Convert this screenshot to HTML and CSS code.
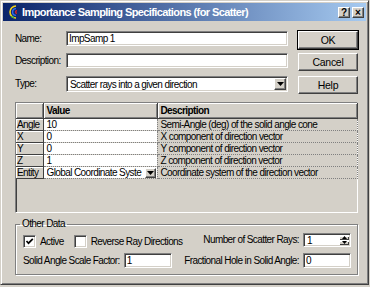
FILE: index.html
```html
<!doctype html>
<html lang="en">
<head>
  <meta charset="UTF-8">
  <title>Importance Sampling Specifications (for Scatter)</title>
  <link rel="stylesheet" href="styles.css">
</head>
<body>
  <div class="window">
    <div class="titlebar">
      <svg class="app-icon" viewBox="0 0 12 14" width="12" height="14">
        <path d="M10 1 A6 6 0 0 0 10 13" stroke="#f2d21a" stroke-width="1.6" fill="none"/>
        <path d="M10 3.6 A3.4 3.4 0 0 0 10 10.4" stroke="#2f6cf0" stroke-width="1.4" fill="none"/>
        <path d="M11 5.6 A1.4 1.4 0 0 0 11 8.4" stroke="#e02424" stroke-width="1.3" fill="none"/>
        <path d="M5 11.5 L8 12.6" stroke="#2fb54a" stroke-width="1.3"/>
      </svg>
      <span class="title">Importance Sampling Specifications (for Scatter)</span>
      <div class="caption-btns">
        <span class="cap-btn">?</span>
        <span class="cap-btn">×</span>
      </div>
    </div>

    <div class="client">
      <div class="top">
        <label class="lbl">Name:</label>
        <input class="edit" type="text" value="ImpSamp 1">
        <button class="btn default">OK</button>

        <label class="lbl">Description:</label>
        <input class="edit" type="text" value="">
        <button class="btn">Cancel</button>

        <label class="lbl">Type:</label>
        <div class="combo">
          <span class="combo-text">Scatter rays into a given direction</span>
          <span class="drop-btn"><svg viewBox="0 0 7 4" width="7" height="4"><path d="M0 0h7L3.5 4z" fill="#000"/></svg></span>
        </div>
        <button class="btn">Help</button>
      </div>

      <div class="grid-frame">
        <table class="props">
          <colgroup>
            <col class="c-name">
            <col class="c-value">
            <col class="c-desc">
          </colgroup>
          <thead>
            <tr>
              <th></th>
              <th>Value</th>
              <th>Description</th>
            </tr>
          </thead>
          <tbody>
            <tr>
              <th>Angle</th>
              <td class="val">10</td>
              <td class="desc">Semi-Angle (deg) of the solid angle cone</td>
            </tr>
            <tr>
              <th>X</th>
              <td class="val">0</td>
              <td class="desc">X component of direction vector</td>
            </tr>
            <tr>
              <th>Y</th>
              <td class="val">0</td>
              <td class="desc">Y component of direction vector</td>
            </tr>
            <tr>
              <th>Z</th>
              <td class="val">1</td>
              <td class="desc">Z component of direction vector</td>
            </tr>
            <tr>
              <th>Entity</th>
              <td class="val">
                <div class="cell-combo">
                  <span class="cell-combo-text">Global Coordinate Syste</span>
                  <span class="drop-btn small"><svg viewBox="0 0 7 4" width="7" height="4"><path d="M0 0h7L3.5 4z" fill="#000"/></svg></span>
                </div>
              </td>
              <td class="desc">Coordinate system of the direction vector</td>
            </tr>
          </tbody>
        </table>
      </div>

      <fieldset class="group">
        <legend>Other Data</legend>
        <div class="group-row">
          <div class="checks">
            <span class="check">
              <span class="box"><svg viewBox="0 0 9 9" width="9" height="9"><path d="M1.5 4 L3.5 6.2 L7.8 1.8" stroke="#000" stroke-width="1.7" fill="none"/></svg></span>
              Active
            </span>
            <span class="check">
              <span class="box"></span>
              Reverse Ray Directions
            </span>
          </div>
          <div class="field">
            <span>Number of Scatter Rays:</span>
            <div class="spin">
              <span class="spin-text">1</span>
              <span class="spin-btns">
                <span class="spin-btn"><svg viewBox="0 0 5 3" width="5" height="3"><path d="M0 3h5L2.5 0z" fill="#000"/></svg></span>
                <span class="spin-btn"><svg viewBox="0 0 5 3" width="5" height="3"><path d="M0 0h5L2.5 3z" fill="#000"/></svg></span>
              </span>
            </div>
          </div>
        </div>
        <div class="group-row second">
          <div class="field">
            <span>Solid Angle Scale Factor:</span>
            <input class="edit small" type="text" value="1">
          </div>
          <div class="field">
            <span>Fractional Hole in Solid Angle:</span>
            <input class="edit small" type="text" value="0">
          </div>
        </div>
      </fieldset>
    </div>
  </div>
</body>
</html>
```

FILE: styles.css
```css
body { margin: 0; background: #d4d0c8; font: 10px "Liberation Sans", Arial, sans-serif; letter-spacing: -0.6px; color: #000; }

.window { width: 369px; height: 285px; box-sizing: border-box; padding: 2px; border: 1px solid; border-color: #d4d0c8 #404040 #404040 #d4d0c8; box-shadow: inset 1px 1px #fff, inset -1px -1px #808080; background: #d4d0c8; }

/* caption */
.titlebar { height: 18px; display: flex; align-items: center; padding: 0 2px 0 3px; background: linear-gradient(to right, #0a246a, #a6caf0); color: #fff; }
.app-icon { flex: none; margin-right: 4px; }
.title { flex: 1; font-weight: bold; font-size: 11px; letter-spacing: -0.6px; white-space: nowrap; }
.caption-btns { display: flex; gap: 2px; }
.cap-btn { width: 12px; height: 11px; box-sizing: border-box; display: flex; align-items: center; justify-content: center; background: #d4d0c8; color: #000; font-weight: bold; font-size: 10px; letter-spacing: 0; border: 1px solid; border-color: #fff #404040 #404040 #fff; box-shadow: inset -1px -1px #808080; }

.client { padding: 10px 8px 0 12px; }

/* top fields */
.top { display: grid; grid-template-columns: 51px 232px 60px; grid-template-rows: 22px 23px 19px; }
.lbl { line-height: 15px; }
.edit { box-sizing: border-box; height: 15px; width: 222px; margin: 0; padding: 0 2px; font: inherit; letter-spacing: inherit; color: #000; background: #fff; border: 1px solid; border-color: #808080 #fff #fff #808080; box-shadow: inset 1px 1px #404040, inset -1px -1px #d4d0c8; outline: none; }
.edit.small { width: 48px; height: 15px; }
.combo { box-sizing: border-box; height: 16px; width: 222px; display: flex; align-items: center; padding: 2px 1px 2px 3px; background: #fff; border: 1px solid; border-color: #808080 #fff #fff #808080; box-shadow: inset 1px 1px #404040, inset -1px -1px #d4d0c8; }
.combo-text { flex: 1; }
.drop-btn { flex: none; width: 12px; height: 12px; box-sizing: border-box; display: flex; align-items: center; justify-content: center; background: #d4d0c8; border: 1px solid; border-color: #fff #404040 #404040 #fff; box-shadow: inset -1px -1px #808080; }
.drop-btn.small { width: 11px; height: 10px; }

.btn { box-sizing: border-box; width: 60px; height: 18px; margin: 0; padding: 0; font: inherit; font-size: 10.5px; letter-spacing: -0.3px; color: #000; background: #d4d0c8; border: 1px solid; border-color: #fff #404040 #404040 #fff; box-shadow: inset -1px -1px #808080; }
.btn.default { outline: 1px solid #000; }

/* property grid */
.grid-frame { margin-top: 7px; width: 343px; height: 111px; box-sizing: border-box; border: 1px solid; border-color: #808080 #fff #fff #808080; box-shadow: inset 1px 1px #404040; background: #d4d0c8; }
.props { border-collapse: collapse; table-layout: fixed; width: 341px; }
.c-name { width: 27px; }
.c-value { width: 114px; }
.c-desc { width: 200px; }
.props th, .props td { padding: 0 0 0 2px; text-align: left; white-space: nowrap; overflow: hidden; font-weight: normal; }
.props thead th { height: 15px; font-weight: bold; padding-left: 3px; border-right: 1px solid #404040; border-bottom: 1px solid #404040; box-shadow: inset 1px 1px #fff, inset -1px -1px #808080; }
.props tbody th { height: 11px; line-height: 11px; padding-left: 1px; border-right: 1px solid #404040; border-bottom: 1px solid #404040; box-shadow: inset 1px 1px #fff; }
.props td { height: 11px; line-height: 11px; border-right: 1px dotted #808080; border-bottom: 1px dotted #808080; }
.props td.val { background: #fff; padding-left: 3px; }
.props td.desc { padding-left: 3px; }
.cell-combo { display: flex; align-items: center; padding-right: 1px; }
.cell-combo-text { flex: 1; overflow: hidden; }

/* other data */
.group { margin: 5px 0 0; padding: 2px 6px 6px 7px; width: 343px; box-sizing: border-box; border: 1px solid #808080; box-shadow: inset 1px 1px #fff, 1px 1px #fff; }
.group legend { margin-left: -3px; padding: 0 2px; line-height: 12px; }
.group-row { display: flex; justify-content: space-between; align-items: center; height: 15px; }
.group-row.second { margin-top: 5px; height: 16px; }
.checks { display: flex; gap: 10px; padding-top: 3px; }
.check { display: flex; align-items: center; gap: 4px; }
.box { width: 13px; height: 13px; box-sizing: border-box; display: flex; align-items: center; justify-content: center; background: #fff; border: 1px solid; border-color: #808080 #fff #fff #808080; box-shadow: inset 1px 1px #404040, inset -1px -1px #d4d0c8; }
.field { display: flex; align-items: center; gap: 4px; }
.spin { box-sizing: border-box; width: 48px; height: 14px; display: flex; align-items: stretch; padding: 2px 1px 1px 3px; background: #fff; border: 1px solid; border-color: #808080 #fff #fff #808080; box-shadow: inset 1px 1px #404040, inset -1px -1px #d4d0c8; }
.spin-text { flex: 1; line-height: 10px; }
.spin-btns { display: flex; flex-direction: column; gap: 1px; width: 10px; }
.spin-btn { flex: 1; display: flex; align-items: center; justify-content: center; background: #d4d0c8; box-shadow: inset 1px 1px #fff, inset -1px -1px #404040; }
```
